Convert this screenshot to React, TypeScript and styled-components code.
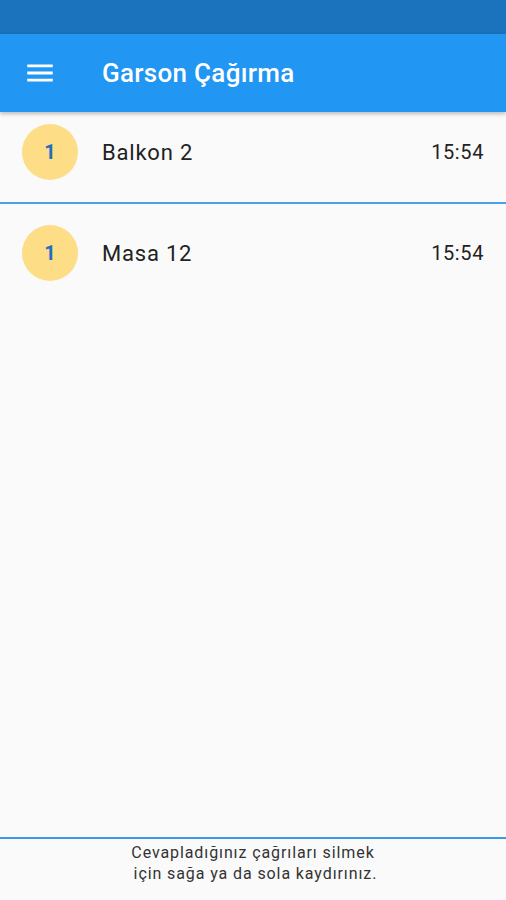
import React from 'react';
import styled, { createGlobalStyle } from 'styled-components';

const GlobalStyle = createGlobalStyle`
  html, body {
    margin: 0;
    padding: 0;
    background: #fafafa;
    font-family: Roboto, "Noto Sans", "Liberation Sans", sans-serif;
  }
`;

type Call = { count: number; place: string; time: string };

const calls: Call[] = [
  { count: 1, place: 'Balkon 2', time: '15:54' },
  { count: 1, place: 'Masa 12', time: '15:54' },
];

const App: React.FC = () => {
  return (
    <Screen>
      <GlobalStyle />
      <StatusBar />
      <AppBar>
        <MenuButton aria-label="menu">
          <svg width="34" height="34" viewBox="0 0 24 24">
            <path d="M3 18h18v-2H3v2zm0-5h18v-2H3v2zm0-7v2h18V6H3z" fill="#fff" />
          </svg>
        </MenuButton>
        <Title>Garson Çağırma</Title>
      </AppBar>
      <List>
        {calls.map((c, i) => (
          <Row key={i} $divider={i < calls.length - 1}>
            <Badge>{c.count}</Badge>
            <Place>{c.place}</Place>
            <Time>{c.time}</Time>
          </Row>
        ))}
      </List>
      <Footer>
        Cevapladığınız çağrıları silmek
        <br />
        &nbsp;için sağa ya da sola kaydırınız.
      </Footer>
    </Screen>
  );
};

export default App;

const Screen = styled.div`
  display: flex;
  flex-direction: column;
  min-height: 100vh;
  background: #fafafa;
`;

const StatusBar = styled.div`
  height: 34px;
  background: #1b72bd;
`;

const AppBar = styled.header`
  position: relative;
  z-index: 2;
  display: flex;
  align-items: center;
  height: 78px;
  padding: 0 0 0 23px;
  background: #2196f3;
  box-shadow: 0 2px 4px rgba(0, 0, 0, 0.25);
`;

const MenuButton = styled.div`
  display: flex;
  width: 34px;
  height: 34px;
  margin-right: 45px;
`;

const Title = styled.h1`
  margin: 0;
  color: #fff;
  font-size: 26px;
  font-weight: 500;
  letter-spacing: 0.3px;
`;

const List = styled.div`
  flex: 1;
  display: flex;
  flex-direction: column;
`;

const Row = styled.div<{ $divider: boolean }>`
  display: flex;
  align-items: center;
  padding: 21px 22px 22px 22px;
  border-bottom: 2px solid ${(p) => (p.$divider ? '#4aa0e6' : 'transparent')};

  &:first-child {
    padding-top: 12px;
  }
`;

const Badge = styled.div`
  display: flex;
  align-items: center;
  justify-content: center;
  width: 56px;
  height: 56px;
  border-radius: 50%;
  background: #fddd85;
  color: #1e6fbf;
  font-size: 20px;
  font-weight: 700;
  margin-right: 24px;
`;

const Place = styled.div`
  flex: 1;
  color: #222;
  font-size: 22px;
  letter-spacing: 0.8px;
`;

const Time = styled.div`
  color: #222;
  font-size: 20px;
  letter-spacing: 0.6px;
`;

const Footer = styled.footer`
  border-top: 2px solid #3d98e6;
  padding: 3px 0 16px;
  text-align: center;
  color: #333;
  font-size: 16px;
  line-height: 21px;
  letter-spacing: 0.9px;
`;
